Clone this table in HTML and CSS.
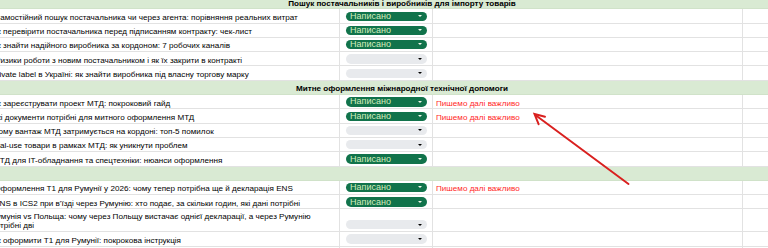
FILE: index.html
```html
<!DOCTYPE html>
<html lang="uk">
<head>
<meta charset="utf-8">
<title>Контент-план</title>
<link rel="stylesheet" href="styles.css">
</head>
<body>
<div class="sheet">
  <div class="band"><span class="band-label">Пошук постачальників і виробників для імпорту товарів</span></div>
  <div class="row">
    <div class="cell title"><span class="t s6">Самостійний пошук постачальника чи через агента: порівняння реальних витрат</span></div>
    <div class="cell status"><span class="chip done">Написано<i class="caret"></i></span></div>
    <div class="cell note"></div>
    <div class="cell extra"></div>
  </div>
  <div class="row">
    <div class="cell title"><span class="t">Як перевірити постачальника перед підписанням контракту: чек-лист</span></div>
    <div class="cell status"><span class="chip done">Написано<i class="caret"></i></span></div>
    <div class="cell note"></div>
    <div class="cell extra"></div>
  </div>
  <div class="row">
    <div class="cell title"><span class="t">Як знайти надійного виробника за кордоном: 7 робочих каналів</span></div>
    <div class="cell status"><span class="chip done">Написано<i class="caret"></i></span></div>
    <div class="cell note"></div>
    <div class="cell extra"></div>
  </div>
  <div class="row">
    <div class="cell title"><span class="t s5">Ризики роботи з новим постачальником і як їх закрити в контракті</span></div>
    <div class="cell status"><span class="chip empty"><i class="caret"></i></span></div>
    <div class="cell note"></div>
    <div class="cell extra"></div>
  </div>
  <div class="row">
    <div class="cell title"><span class="t">Private label в Україні: як знайти виробника під власну торгову марку</span></div>
    <div class="cell status"><span class="chip empty"><i class="caret"></i></span></div>
    <div class="cell note"></div>
    <div class="cell extra"></div>
  </div>

  <div class="band"><span class="band-label">Митне оформлення міжнародної технічної допомоги</span></div>
  <div class="row">
    <div class="cell title"><span class="t">Як зареєструвати проект МТД: покроковий гайд</span></div>
    <div class="cell status"><span class="chip done">Написано<i class="caret"></i></span></div>
    <div class="cell note"><span class="remark">Пишемо далі важливо</span></div>
    <div class="cell extra"></div>
  </div>
  <div class="row">
    <div class="cell title"><span class="t">Які документи потрібні для митного оформлення МТД</span></div>
    <div class="cell status"><span class="chip done">Написано<i class="caret"></i></span></div>
    <div class="cell note"><span class="remark">Пишемо далі важливо</span></div>
    <div class="cell extra"></div>
  </div>
  <div class="row">
    <div class="cell title"><span class="t s7">Чому вантаж МТД затримується на кордоні: топ-5 помилок</span></div>
    <div class="cell status"><span class="chip empty"><i class="caret"></i></span></div>
    <div class="cell note"></div>
    <div class="cell extra"></div>
  </div>
  <div class="row">
    <div class="cell title"><span class="t s10">Dual-use товари в рамках МТД: як уникнути проблем</span></div>
    <div class="cell status"><span class="chip empty"><i class="caret"></i></span></div>
    <div class="cell note"></div>
    <div class="cell extra"></div>
  </div>
  <div class="row">
    <div class="cell title"><span class="t s7">МТД для IT-обладнання та спецтехніки: нюанси оформлення</span></div>
    <div class="cell status"><span class="chip done">Написано<i class="caret"></i></span></div>
    <div class="cell note"></div>
    <div class="cell extra"></div>
  </div>

  <div class="band"><span class="band-label"></span></div>
  <div class="row">
    <div class="cell title"><span class="t s6">Оформлення Т1 для Румунії у 2026: чому тепер потрібна ще й декларація ENS</span></div>
    <div class="cell status"><span class="chip done">Написано<i class="caret"></i></span></div>
    <div class="cell note"><span class="remark">Пишемо далі важливо</span></div>
    <div class="cell extra"></div>
  </div>
  <div class="row">
    <div class="cell title"><span class="t s6">ENS в ICS2 при в'їзді через Румунію: хто подає, за скільки годин, які дані потрібні</span></div>
    <div class="cell status"><span class="chip done">Написано<i class="caret"></i></span></div>
    <div class="cell note"></div>
    <div class="cell extra"></div>
  </div>
  <div class="row tall">
    <div class="cell title"><span class="t">Румунія vs Польща: чому через Польщу вистачає однієї декларації, а через Румунію потрібні дві</span></div>
    <div class="cell status"><span class="chip empty"><i class="caret"></i></span></div>
    <div class="cell note"></div>
    <div class="cell extra"></div>
  </div>
  <div class="row">
    <div class="cell title"><span class="t">Як оформити Т1 для Румунії: покрокова інструкція</span></div>
    <div class="cell status"><span class="chip empty"><i class="caret"></i></span></div>
    <div class="cell note"></div>
    <div class="cell extra"></div>
  </div>
  <div class="row">
    <div class="cell title"></div>
    <div class="cell status"></div>
    <div class="cell note"></div>
    <div class="cell extra"></div>
  </div>
</div>

<svg class="arrow" width="768" height="248" viewBox="0 0 768 248" aria-hidden="true">
  <line x1="628.5" y1="184" x2="536" y2="115.5" stroke="#d9201f" stroke-width="2" stroke-linecap="round"/>
  <polyline points="545,116.8 534.5,114 538.6,124.2" fill="none" stroke="#d9201f" stroke-width="2" stroke-linejoin="miter" stroke-linecap="round"/>
</svg>
</body>
</html>
```

FILE: styles.css
```css
html, body {
  margin: 0;
  padding: 0;
  width: 768px;
  height: 248px;
  overflow: hidden;
  background: #ffffff;
  font-family: "Liberation Sans", Arial, sans-serif;
  color: #000000;
}

body {
  position: relative;
}

.sheet {
  margin-top: -5px;
  width: 768px;
}

.row {
  display: grid;
  grid-template-columns: 340px 93px 310px 1fr;
  height: 14.3px;
  box-sizing: border-box;
  border-bottom: 1px solid #e2e2e2;
}

.row.tall {
  height: 22.8px;
}

.cell {
  display: flex;
  align-items: flex-end;
  min-width: 0;
  overflow: hidden;
  border-right: 1px solid #e2e2e2;
}

.cell.extra {
  border-right: none;
}

.title {
  padding-right: 2px;
}

.t {
  display: block;
  margin-left: -8.6px;
  font-size: 8.1px;
  line-height: 9.3px;
  padding-bottom: 0.5px;
}

.t.s5 {
  margin-left: -4.8px;
}

.t.s6 {
  margin-left: -5.8px;
}

.t.s7 {
  margin-left: -6.9px;
}

.t.s10 {
  margin-left: -10.4px;
}

.band {
  display: flex;
  align-items: flex-end;
  height: 14.3px;
  box-sizing: border-box;
  background: #d9ead3;
  border-bottom: 1px solid #d0e2c9;
  overflow: hidden;
}

.band-label {
  flex: none;
  width: 804px;
  text-align: center;
  font-weight: bold;
  font-size: 8.1px;
  line-height: 9.3px;
  padding-bottom: 0.5px;
}

.status {
  align-items: flex-end;
}

.chip {
  position: relative;
  display: flex;
  align-items: center;
  box-sizing: border-box;
  width: 81px;
  height: 9.3px;
  margin: 0 0 1.8px 6px;
  padding-left: 4px;
  border-radius: 5px;
  font-size: 9px;
  line-height: 1;
}

.chip.done {
  background: #11734b;
  color: #d4edbc;
}

.chip.empty {
  background: #e8eaed;
  color: #000000;
}

.caret {
  position: absolute;
  right: 5.3px;
  top: 3.4px;
  width: 0;
  height: 0;
  border-left: 2.4px solid transparent;
  border-right: 2.4px solid transparent;
  border-top: 2.7px solid currentColor;
}

.chip.done .caret {
  border-top-color: #f1f8ec;
}

.note {
  padding-left: 3px;
}

.remark {
  display: block;
  font-size: 8.1px;
  line-height: 9.3px;
  padding-bottom: 0.5px;
  color: #ff1f1f;
  white-space: nowrap;
}

.arrow {
  position: absolute;
  left: 0;
  top: 0;
  pointer-events: none;
}
```
